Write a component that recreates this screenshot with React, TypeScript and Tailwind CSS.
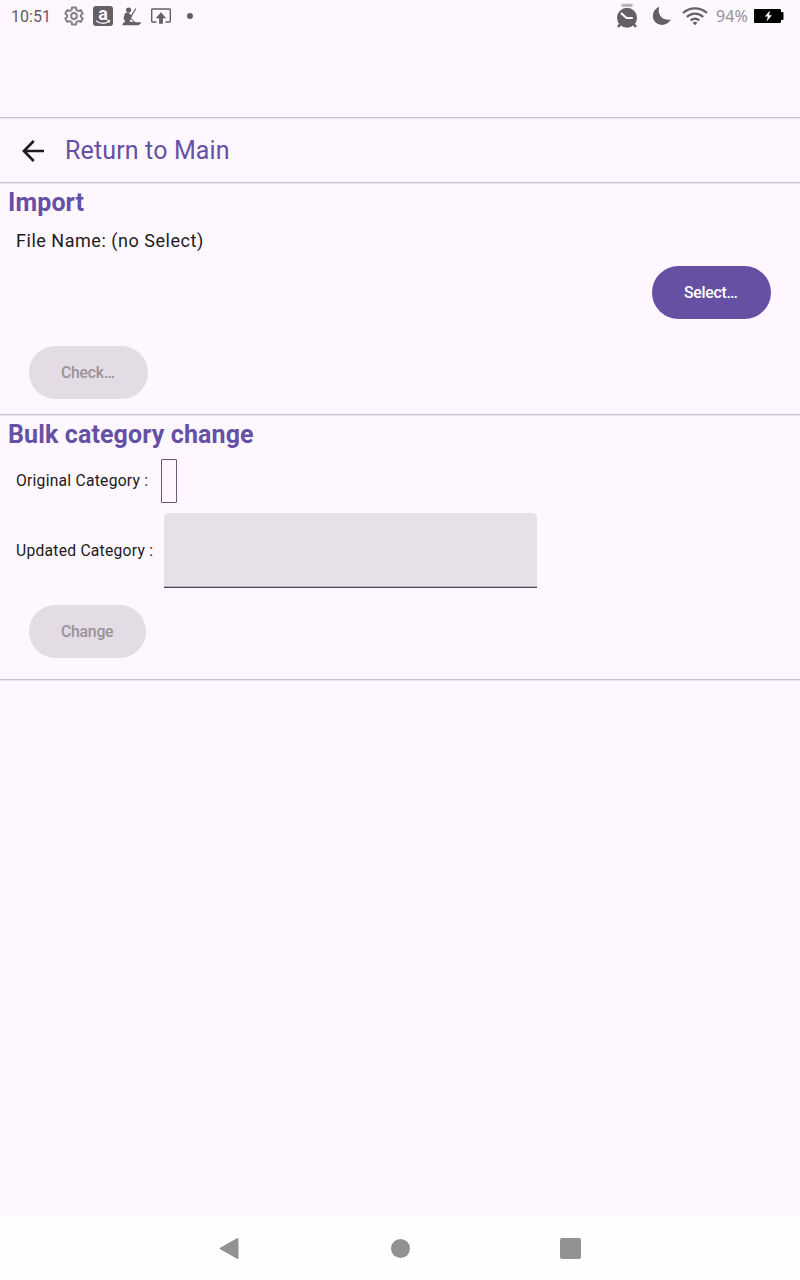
import type { ReactNode } from "react";

function Divider() {
  return <div className="h-[2px] w-full shrink-0 border-b border-t border-b-[#ece4ef] border-t-[#c9c3ce]" />;
}

function SectionTitle({ children }: { children: ReactNode }) {
  return (
    <h2 className="h-[38px] pl-2 text-[25px] font-bold leading-[38px] tracking-[0.120px] text-[#6650a4]">{children}</h2>
  );
}

function PillButton({ children, className }: { children: ReactNode; className: string }) {
  return (
    <button
      className={`flex h-[53px] shrink-0 items-center justify-start rounded-full pl-8 text-[15.800px] font-medium leading-[26px] tracking-[-0.250px] ${className}`}
    >
      {children}
    </button>
  );
}

function StatusBar() {
  return (
    <div className="flex h-8 shrink-0 items-center text-[#626064]">
      <span className="w-[53px] pl-[11px] pt-px text-[16px] tracking-[0.050px] text-[#5f5c61]">10:51</span>
      <svg className="ml-[11px] h-5 w-5" viewBox="0 0 20 20" fill="none" stroke="#858287" strokeWidth="2" strokeLinejoin="round">
        <path d="M8 1.500h4l.5 2.500 1.800 1 2.400-.9 2 3.400-1.900 1.700v1.600l1.900 1.700-2 3.400-2.400-.9-1.800 1-.5 2.500H8L7.500 16l-1.800-1-2.400.9-2-3.400 1.900-1.700V9.200L1.300 7.500l2-3.400L5.700 5l1.800-1z" />
        <circle cx="10" cy="10" r="2.900" />
      </svg>
      <span className="relative ml-[9px] flex h-5 w-5 items-center justify-center rounded-[3px] bg-[#626064]">
        <span className="-mt-[4px] text-[18px] font-bold leading-none text-[#fef7ff]">a</span>
        <svg className="absolute inset-0 h-5 w-5" viewBox="0 0 20 20" fill="none" stroke="#fef7ff" strokeWidth="1.200">
          <path d="M3 14.700c4 3.200 9 3.200 13 .6M14.300 14.300l2.300.2-.8 2.300" />
        </svg>
      </span>
      <svg className="ml-[9px] h-5 w-5" viewBox="0 0 20 20" fill="currentColor">
        <circle cx="6.600" cy="4" r="2.600" />
        <path d="M3 7l3.500-.4L9 9.300l4.400-7 .9.500-4.500 7.700-.5 2 4.200 3.700h5.300v1.200l-2.400 1.800H.5v-1.500L3 15.800 1.600 12z" />
        <path d="M8.700 13.300l3.200 2.500H7.500z" fill="#fef7ff" />
      </svg>
      <svg className="ml-[9px] h-5 w-5" viewBox="0 0 20 20" fill="none" stroke="currentColor" strokeWidth="1.400">
        <path d="M5.500 16h-4a.8.8 0 01-.8-.8V3.800a.8.8 0 01.8-.8h17a.8.8 0 01.8.8v11.400a.8.8 0 01-.8.8h-4" />
        <path d="M10 6.300l5.200 6h-3.300v5.500H8.100v-5.500H4.800z" fill="currentColor" stroke="none" />
      </svg>
      <span className="ml-[16px] h-[6px] w-[6px] rounded-full bg-[#626064]" />
      <svg className="ml-auto h-[26px] w-[22px]" viewBox="0 0 22 26" fill="none">
        <path d="M5.500.800h11v3h-11z" fill="#b6b1b8" />
        <circle cx="11" cy="14.700" r="10" fill="#626064" />
        <path d="M4.500 21l-2.500 3M17.500 21l2.500 3" stroke="#626064" strokeWidth="2.600" />
        <path d="M5 10l5.500 5h6.300" stroke="#fef7ff" strokeWidth="2.200" />
      </svg>
      <svg className="ml-[14px] h-5 w-5" viewBox="0 0 20 20" fill="#626064">
        <path d="M7.200.8C5 8.800 10.500 15 19 13.500 16 18.300 10.500 20.300 5.500 17.800-1.200 14.300-.6 4 7.200.8z" />
      </svg>
      <svg className="ml-[10px] h-5 w-[26px]" viewBox="0 0 26 20" fill="none" stroke="#626064" strokeWidth="2.200">
        <path d="M1 7c7-6.300 17-6.300 24 0M4.800 11c5-4.500 11.400-4.500 16.400 0M8.600 14.500c2.700-2.300 6.100-2.300 8.800 0" />
        <path d="M10.500 16.600q2.500-1.700 5 0L13 19.200z" fill="#626064" stroke="none" />
      </svg>
      <span className="ml-[8px] w-[34px] whitespace-nowrap font-['Noto_Sans'] text-[16px] tracking-[0.100px] text-[#949096]">94%</span>
      <svg className="ml-[4px] mr-4 h-[14px] w-[30px]" viewBox="0 0 30 14">
        <path d="M1 0h25a1 1 0 011 1v2h1.500a1 1 0 011 1v6a1 1 0 01-1 1H27v2a1 1 0 01-1 1H1a1 1 0 01-1-1V1a1 1 0 011-1z" fill="#000" />
        <path d="M16 1.500l-5.200 6h3L12.600 12.500l5.400-6.200h-3z" fill="#fff" />
      </svg>
    </div>
  );
}

export default function App() {
  return (
    <div className="flex h-[1280px] w-[800px] flex-col overflow-hidden bg-[#fef7ff] font-[Roboto,sans-serif] text-[#1d1b20]">
      <StatusBar />
      <div className="h-[85px] shrink-0" />
      <Divider />
      <header className="flex h-[63px] shrink-0 items-center pl-[22px]">
        <svg className="h-[22px] w-[22px]" viewBox="0 0 22 22" fill="none" stroke="#1d1b20" strokeWidth="2.600">
          <path d="M11.700 1L1.900 11l9.800 10M2 11h20" />
        </svg>
        <h1 className="ml-[21px] text-[25px] leading-8 tracking-[0.140px] text-[#6650a4]">Return to Main</h1>
      </header>
      <Divider />
      <section className="flex h-[230px] shrink-0 flex-col">
        <SectionTitle>Import</SectionTitle>
        <p className="h-[38px] pl-4 text-[18px] leading-[38px] tracking-[0.530px]">File Name: (no Select)</p>
        <div className="mt-[6px] flex justify-end pr-[29px]">
          <PillButton className="w-[119px] bg-[#6650a4] text-white">Select…</PillButton>
        </div>
        <div className="mt-[27px] flex pl-[29px]">
          <PillButton className="w-[119px] bg-[#e3dce4] text-[#98939a]">Check…</PillButton>
        </div>
      </section>
      <Divider />
      <section className="flex h-[263px] shrink-0 flex-col">
        <SectionTitle>Bulk category change</SectionTitle>
        <div className="mt-[5px] flex h-[44px] items-center pl-4">
          <span className="w-[145px] whitespace-nowrap text-[15.700px] tracking-[0.230px]">Original Category :</span>
          <button aria-label="Original category" className="h-[44px] w-4 rounded-[1px] border border-[#65587b]" />
        </div>
        <div className="mt-[10px] flex h-[75px] items-center pl-4">
          <label htmlFor="updated" className="w-[148px] whitespace-nowrap text-[15.700px] tracking-[0.230px]">Updated Category :</label>
          <input
            id="updated"
            className="h-[75px] w-[373px] rounded-t-[5px] border-b border-[#49454f] bg-[#e6e0e9] px-4 shadow-[inset_0_-1px_0_#b8b2bc] outline-none"
          />
        </div>
        <div className="mt-[17px] flex pl-[29px]">
          <PillButton className="w-[117px] bg-[#e3dce4] text-[#98939a]">Change</PillButton>
        </div>
      </section>
      <Divider />
      <main className="flex-1" />
      <nav className="flex h-16 shrink-0 items-center bg-[#fefefe] pl-[219px] pt-px text-[#929292]">
        <svg className="-mt-px h-[22px] w-5" viewBox="0 0 20 22" fill="currentColor">
          <path d="M1.200 10.700L18 1.200q1.500-.7 1.500 1v18.600q0 1.700-1.500 1L1.200 12.300q-1-.8 0-1.600z" />
        </svg>
        <span className="ml-[152px] h-[19px] w-[19px] rounded-full bg-[#929292]" />
        <span className="ml-[150px] h-[20.500px] w-[20.500px] rounded-[2px] bg-[#929292]" />
      </nav>
    </div>
  );
}
